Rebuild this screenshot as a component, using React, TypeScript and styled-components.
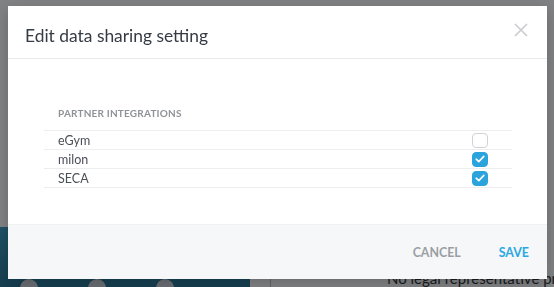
import React, { useState } from "react";
import styled, { createGlobalStyle } from "styled-components";

interface Partner {
  name: string;
  enabled: boolean;
}

const GlobalStyle = createGlobalStyle`
  html, body {
    margin: 0;
    padding: 0;
    height: 100%;
  }
  body {
    font-family: "Lato", "Open Sans", sans-serif;
    background: #ffffff;
  }
`;

/* page behind the dialog */
const Page = styled.div`
  height: 287px;
  display: flex;
  flex-direction: column;
  justify-content: flex-end;
  overflow: hidden;
`;

const PageBottom = styled.div`
  display: flex;
  height: 60px;
`;

const TealPanel = styled.div`
  width: 230px;
  background: linear-gradient(180deg, #3d9fc4 0%, #2c7896 100%);
  display: flex;
  align-items: flex-end;
  gap: 50px;
  padding: 0 0 0 20px;
`;

const Dot = styled.span`
  width: 18px;
  height: 18px;
  border-radius: 50%;
  background: #d4d8dc;
  margin-bottom: -10px;
`;

const Divider = styled.div`
  width: 20px;
  border-right: 1px solid #c2c2c2;
`;

const PageText = styled.div`
  flex: 1;
  min-width: 0;
  display: flex;
  align-items: flex-end;
  padding: 0 0 1px 116px;
  font-size: 15px;
  color: #333;
  white-space: nowrap;
  overflow: hidden;
  line-height: 1;
`;

const Backdrop = styled.div`
  position: fixed;
  inset: 0;
  background: rgba(2, 6, 10, 0.5);
  display: flex;
  align-items: flex-start;
  padding: 6px 0 0 8px;
`;

const Modal = styled.div`
  width: 539px;
  height: 273px;
  background: #fff;
  display: flex;
  flex-direction: column;
  box-shadow: 0 4px 14px rgba(0, 0, 0, 0.2);
`;

const Header = styled.div`
  height: 52px;
  flex: none;
  display: flex;
  align-items: center;
  justify-content: space-between;
  padding: 0 19px 0 17px;
  border-bottom: 1px solid #e9ebed;
`;

const Title = styled.h2`
  margin: 0;
  padding-top: 7px;
  font-size: 17.4px;
  font-weight: 400;
  color: #353b44;
`;

const CloseButton = styled.button`
  border: none;
  background: none;
  padding: 0;
  margin-top: -5px;
  width: 14px;
  height: 14px;
  display: flex;
  cursor: pointer;
`;

const Body = styled.div`
  flex: 1;
  padding: 45px 35px 0 36px;
`;

const SectionLabel = styled.div`
  padding-left: 14px;
  font-size: 10px;
  font-weight: 700;
  letter-spacing: 0.2px;
  color: #8f9398;
  height: 18px;
  line-height: 18px;
  margin-bottom: 8px;
`;

const List = styled.div`
  border-top: 1px solid #eceef0;
`;

const Row = styled.div`
  height: 18px;
  display: flex;
  align-items: center;
  justify-content: space-between;
  padding: 0 24px 0 14px;
  border-bottom: 1px solid #eceef0;
`;

const RowName = styled.span`
  font-size: 12.5px;
  color: #4a5058;
`;

const Box = styled.button<{ $checked: boolean }>`
  width: 16px;
  height: 15px;
  padding: 0;
  border-radius: 4px;
  border: 1px solid ${(p) => (p.$checked ? "#2ba4dd" : "#cfd3d7")};
  background: ${(p) => (p.$checked ? "#2ba4dd" : "#fff")};
  display: flex;
  align-items: center;
  justify-content: center;
  cursor: pointer;
`;

const Footer = styled.div`
  height: 54px;
  flex: none;
  background: #f6f7f9;
  border-top: 1px solid #eef0f2;
  display: flex;
  align-items: center;
  justify-content: flex-end;
  gap: 38px;
  padding: 0 18px 0 0;
`;

const FooterButton = styled.button<{ $primary?: boolean }>`
  border: none;
  background: none;
  padding: 0;
  font-family: inherit;
  font-size: 12.4px;
  font-weight: 700;
  letter-spacing: 0;
  color: ${(p) => (p.$primary ? "#2aa8e1" : "#9a9fa4")};
  cursor: pointer;
`;

function CheckMark() {
  return (
    <svg width="10" height="8" viewBox="0 0 10 8" fill="none">
      <path
        d="M1.2 4.2 L3.8 6.6 L8.8 1.4"
        stroke="#fff"
        strokeWidth="1.6"
        strokeLinecap="round"
        strokeLinejoin="round"
      />
    </svg>
  );
}

export default function App() {
  const [partners, setPartners] = useState<Partner[]>([
    { name: "eGym", enabled: false },
    { name: "milon", enabled: true },
    { name: "SECA", enabled: true },
  ]);

  const toggle = (idx: number) => {
    setPartners((list) =>
      list.map((p, i) => (i === idx ? { ...p, enabled: !p.enabled } : p))
    );
  };

  return (
    <>
      <GlobalStyle />
      <Page>
        <PageBottom>
          <TealPanel>
            <Dot />
            <Dot />
            <Dot />
          </TealPanel>
          <Divider />
          <PageText>No legal representative provided</PageText>
        </PageBottom>
      </Page>
      <Backdrop>
        <Modal>
          <Header>
            <Title>Edit data sharing setting</Title>
            <CloseButton aria-label="Close">
              <svg width="14" height="14" viewBox="0 0 14 14">
                <path
                  d="M1 1 L13 13 M13 1 L1 13"
                  stroke="#c9cbcd"
                  strokeWidth="1.6"
                />
              </svg>
            </CloseButton>
          </Header>
          <Body>
            <SectionLabel>PARTNER INTEGRATIONS</SectionLabel>
            <List>
              {partners.map((p, idx) => (
                <Row key={p.name}>
                  <RowName>{p.name}</RowName>
                  <Box $checked={p.enabled} onClick={() => toggle(idx)}>
                    {p.enabled && <CheckMark />}
                  </Box>
                </Row>
              ))}
            </List>
          </Body>
          <Footer>
            <FooterButton>CANCEL</FooterButton>
            <FooterButton $primary>SAVE</FooterButton>
          </Footer>
        </Modal>
      </Backdrop>
    </>
  );
}
